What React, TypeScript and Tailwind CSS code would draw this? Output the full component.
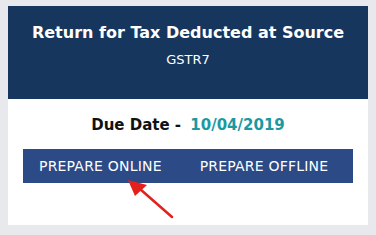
export default function App() {
  return (
    <div className="w-[376px] h-[235px] bg-[#e7e9ec] pt-[6px] px-[8px]" style={{ fontFamily: '"DejaVu Sans", Verdana, sans-serif' }}>
      <div className="relative bg-white h-[219px] flex flex-col">
        {/* Header */}
        <div className="bg-[#17365d] h-[93px] flex flex-col items-center pt-[17px]">
          <div className="text-white font-bold text-[16px] leading-[20px]">Return for Tax Deducted at Source</div>
          <div className="text-white text-[13px] leading-[16px] mt-[9px]">GSTR7</div>
        </div>

        {/* Body */}
        <div className="flex flex-col items-center pt-[17px]">
          <div className="text-[15px] leading-[18px] font-bold text-[#111]">
            Due Date - <span className="text-[#1b98a0] ml-[4px]">10/04/2019</span>
          </div>
        </div>
        <div className="mx-[15px] mt-[15px] h-[34px] bg-[#2c4a86] flex items-center text-white text-[14px] tracking-[0.2px]">
          <span className="ml-[16px]">PREPARE ONLINE</span>
          <span className="ml-[38px]">PREPARE OFFLINE</span>
        </div>

        {/* Arrow annotation */}
        <svg className="absolute left-[112px] top-[171px]" width="56" height="44" viewBox="0 0 56 44">
          <line x1="52" y1="40" x2="20" y2="12" stroke="#e3211c" strokeWidth="2.5" strokeLinecap="round" />
          <polygon points="8,3 27,8 15,19" fill="#e3211c" />
        </svg>
      </div>
    </div>
  )
}
